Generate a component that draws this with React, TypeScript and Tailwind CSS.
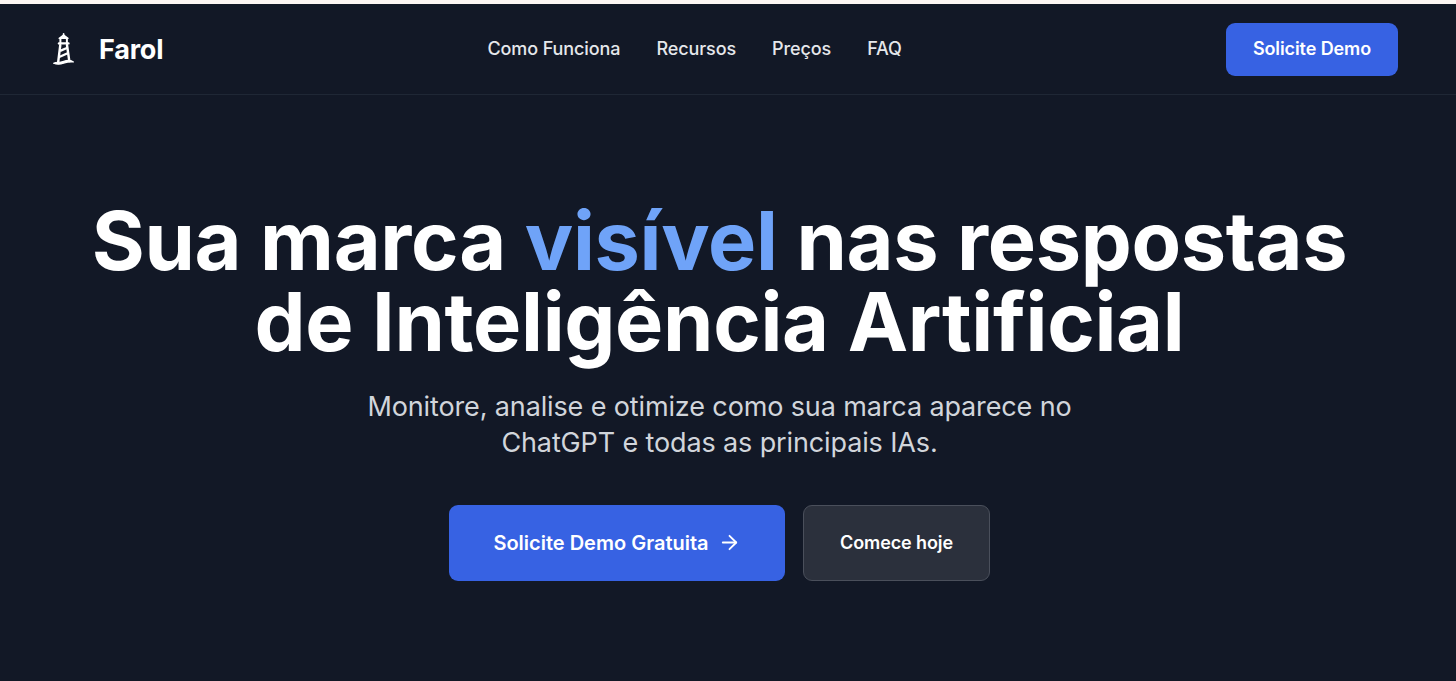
import { ArrowRight } from 'lucide-react'

const links = [
  { label: 'Como Funciona', href: '#como-funciona' },
  { label: 'Recursos', href: '#recursos' },
  { label: 'Preços', href: '#precos' },
  { label: 'FAQ', href: '#faq' },
]

const Lighthouse = () => {
  return (
    <svg
      viewBox="0 0 44 44"
      className="h-11 w-11"
      fill="none"
      stroke="currentColor"
      strokeLinecap="round"
      strokeLinejoin="round"
    >
      <path d="M17.2 10.4 L21.6 7 L26 10.4 Z" fill="currentColor" strokeWidth="1.4" />
      <path d="M21.6 5.8 V8" strokeWidth="1.6" />
      <path d="M18.4 11 V15 M24.9 11 V15" strokeWidth="2" />
      <path d="M17 15.4 H26.4" strokeWidth="2.4" />
      <path d="M18.3 17 L16.2 34 M25 17 L27.3 33" strokeWidth="2.4" />
      <path d="M18.8 22.6 L24.8 20 M17.8 28.8 L25.6 25.2" strokeWidth="2.3" />
      <path
        d="M11.6 35.2 C15 33.4 17.5 35 21 33.6 C24.5 32.2 28.4 31.2 31.4 34 C27 33.5 24.5 34.3 21.5 35.3 C17.5 36.6 14.5 36.4 11.6 35.2 Z"
        fill="currentColor"
        strokeWidth="1.2"
      />
    </svg>
  )
}

const Header = () => {
  return (
    <header className="flex h-[91px] items-center justify-between border-b border-[#1f2735] pr-[58px] pl-[42px]">
      <a href="#" className="flex items-center gap-[13px] pt-px">
        <Lighthouse />
        <span className="text-[27px] leading-9 font-bold tracking-[-0.2px]">Farol</span>
      </a>
      <nav className="flex gap-9 pb-px text-[18px] font-medium tracking-[-0.1px] text-[#e5e7eb]">
        {links.map((link) => (
          <a key={link.href} href={link.href}>
            {link.label}
          </a>
        ))}
      </nav>
      <button className="h-[53px] w-[172px] rounded-[9px] bg-[#3762e3] pb-0.5 text-[18px] font-semibold tracking-[-0.1px]">
        Solicite Demo
      </button>
    </header>
  )
}

const Hero = () => {
  return (
    <section className="flex flex-col items-center pt-[106px] pr-[17px] text-center">
      <h1 className="text-[81px] leading-[81px] font-bold tracking-[-0.33px] whitespace-nowrap">
        Sua marca <span className="text-[#6fa3f8]">visível</span> nas respostas
        <br />
        de Inteligência Artificial
      </h1>
      <p className="mt-[26px] text-[27px] leading-9 tracking-[-0.13px] text-[#d1d5db]">
        Monitore, analise e otimize como sua marca aparece no
        <br />
        ChatGPT e todas as principais IAs.
      </p>
      <div className="mt-[43.5px] flex gap-[18px]">
        <button className="flex h-[76px] w-[336px] items-center justify-center gap-[9px] rounded-[9px] bg-[#3762e3] text-[20px] font-semibold">
          Solicite Demo Gratuita
          <ArrowRight size={23} strokeWidth={1.9} />
        </button>
        <button className="h-[76px] w-[187px] rounded-[9px] border border-[#4a4f5b] bg-[#2b303c] text-[18px] font-semibold tracking-[-0.1px]">
          Comece hoje
        </button>
      </div>
    </section>
  )
}

export default function App() {
  return (
    <div className="h-[681px] overflow-hidden border-t-4 border-[#fdf6f3] bg-[#121826] font-['Inter',sans-serif] text-white">
      <Header />
      <Hero />
    </div>
  )
}
